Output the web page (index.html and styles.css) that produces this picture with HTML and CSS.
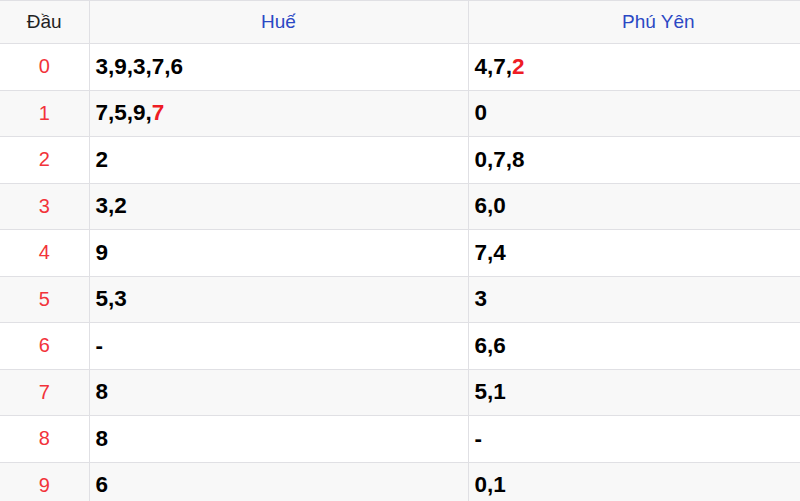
FILE: index.html
```html
<!DOCTYPE html>
<html lang="vi">
<head>
<meta charset="utf-8">
<link rel="stylesheet" href="styles.css">
</head>
<body>
<div class="wrap">
<table class="loto">
  <colgroup><col class="c-head"><col class="c-a"><col class="c-b"></colgroup>
  <thead>
    <tr><th class="dau">Đầu</th><th class="prov">Huế</th><th class="prov">Phú Yên</th></tr>
  </thead>
  <tbody>
    <tr><td class="num">0</td><td class="val">3,9,3,7,6</td><td class="val">4,7,<span class="hl">2</span></td></tr>
    <tr><td class="num">1</td><td class="val">7,5,9,<span class="hl">7</span></td><td class="val">0</td></tr>
    <tr><td class="num">2</td><td class="val">2</td><td class="val">0,7,8</td></tr>
    <tr><td class="num">3</td><td class="val">3,2</td><td class="val">6,0</td></tr>
    <tr><td class="num">4</td><td class="val">9</td><td class="val">7,4</td></tr>
    <tr><td class="num">5</td><td class="val">5,3</td><td class="val">3</td></tr>
    <tr><td class="num">6</td><td class="val">-</td><td class="val">6,6</td></tr>
    <tr><td class="num">7</td><td class="val">8</td><td class="val">5,1</td></tr>
    <tr><td class="num">8</td><td class="val">8</td><td class="val">-</td></tr>
    <tr><td class="num">9</td><td class="val">6</td><td class="val">0,1</td></tr>
  </tbody>
</table>
</div>
</body>
</html>
```
FILE: styles.css
```css
html, body {
  margin: 0;
  padding: 0;
  background: #fff;
}
body {
  font-family: "Liberation Sans", Arial, sans-serif;
}
.wrap {
  width: 800px;
  overflow: hidden;
}
.loto {
  width: 848px;
  border-collapse: collapse;
  table-layout: fixed;
  border-top: 1px solid #e0e0e4;
}
.c-head { width: 89px; }
.c-a { width: 379px; }
.c-b { width: 380px; }
.loto th, .loto td {
  border-top: 1px solid #e0e0e4;
  border-bottom: 1px solid #e0e0e4;
  border-left: 1px solid #e0e0e4;
  padding: 0;
}
.loto tr > :first-child { border-left: none; }
.loto th {
  height: 42px;
  font-weight: normal;
  font-size: 19px;
  text-align: center;
  background: #f8f8f8;
}
.loto th.dau { color: #222; }
.loto th.prov { color: #2b48c4; }
.loto td {
  height: 45.5px;
}
.loto tbody tr:nth-child(even) td { background: #f8f8f8; }
.loto td.num {
  text-align: center;
  color: #f2333a;
  font-size: 20px;
}
.loto td.val {
  padding-left: 6px;
  font-size: 22.5px;
  font-weight: bold;
  color: #000;
}
.hl { color: #ee1c25; }
```
